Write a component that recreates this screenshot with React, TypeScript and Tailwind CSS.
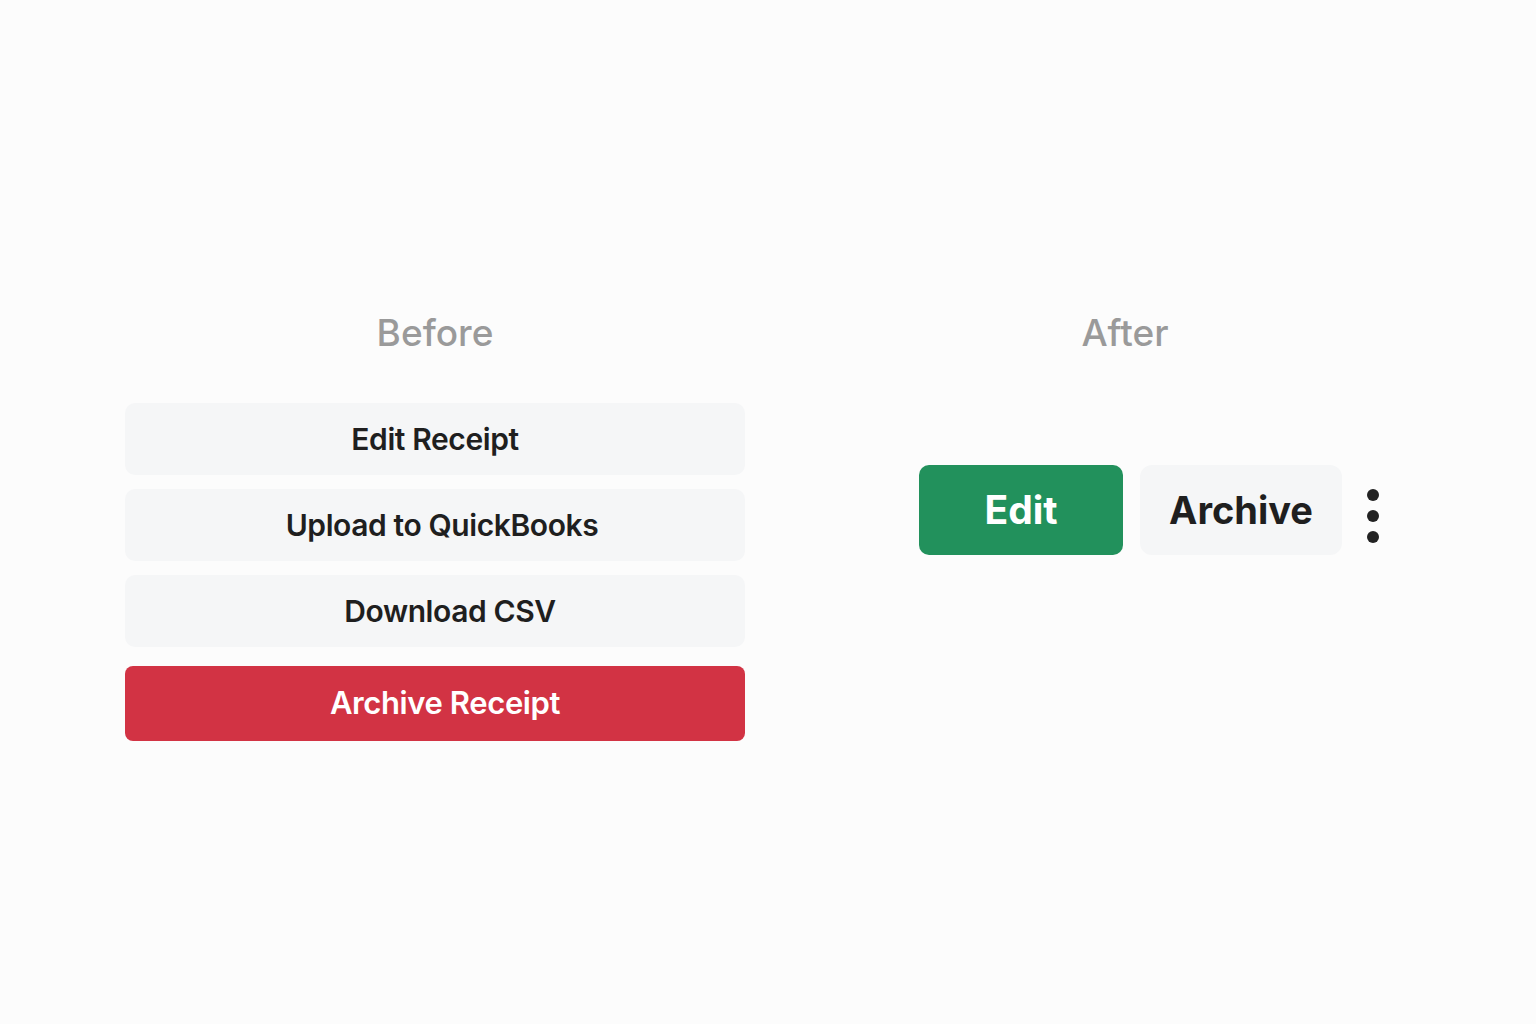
import React from "react";

const font = { fontFamily: "Inter, 'Noto Sans', 'Liberation Sans', sans-serif" };

export default function App() {
  return (
    <div className="min-h-screen w-full bg-[#fcfcfc] pt-[309px] flex items-start" style={font}>
      <div className="ml-[125px] w-[620px] flex flex-col">
        <div className="h-[48px] leading-[48px] text-center text-[37px] text-[#9a9a9a] font-medium">Before</div>
        <div className="mt-[46px] flex flex-col">
          <button className="h-[72px] rounded-[10px] bg-[#f5f6f7] text-[30px] font-semibold text-[#1f1f1f] tracking-[-0.4px]">Edit Receipt</button>
          <button className="mt-[14px] h-[72px] rounded-[10px] bg-[#f5f6f7] pl-[14px] text-[30px] font-semibold text-[#1f1f1f] tracking-[-0.4px]">Upload to QuickBooks</button>
          <button className="mt-[14px] h-[72px] rounded-[10px] bg-[#f5f6f7] pl-[30px] text-[30px] font-semibold text-[#1f1f1f] tracking-[-0.4px]">Download CSV</button>
          <button className="mt-[19px] h-[75px] rounded-[8px] bg-[#d23344] pl-[20px] text-[31px] font-semibold text-white tracking-[-0.4px]">Archive Receipt</button>
        </div>
      </div>
      <div className="ml-[174px] w-[412px] flex flex-col">
        <div className="h-[48px] leading-[48px] text-center text-[37px] text-[#9a9a9a] font-medium">After</div>
        <div className="mt-[108px] flex items-center">
          <button className="h-[90px] w-[204px] shrink-0 rounded-[10px] bg-[#22915c] text-[39px] font-bold text-white">Edit</button>
          <button className="ml-[17px] h-[90px] w-[202px] shrink-0 rounded-[12px] bg-[#f5f6f7] text-[38px] font-bold text-[#1f1f1f]">Archive</button>
          <div className="ml-[25px] flex flex-col items-center gap-[9px] pt-[12px] shrink-0">
            <span className="block h-[12px] w-[12px] rounded-full bg-[#222]" />
            <span className="block h-[12px] w-[12px] rounded-full bg-[#222]" />
            <span className="block h-[12px] w-[12px] rounded-full bg-[#222]" />
          </div>
        </div>
      </div>
    </div>
  );
}
